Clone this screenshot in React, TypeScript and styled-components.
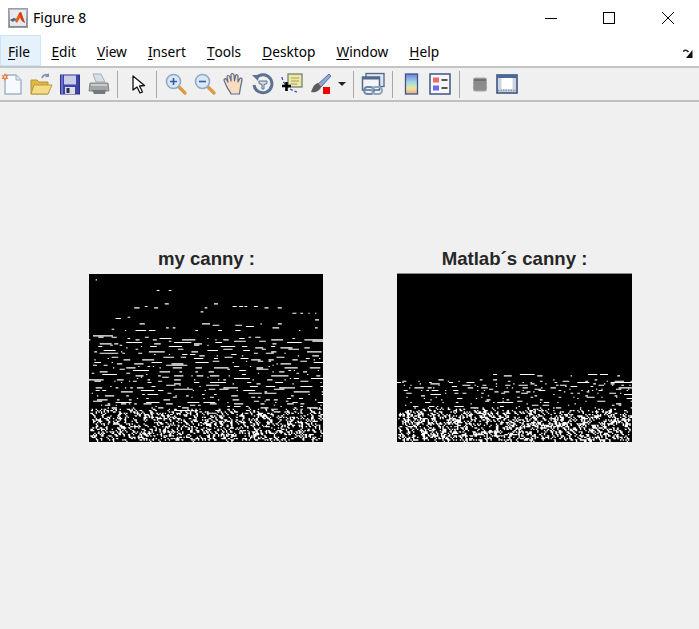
import React from "react";
import styled, { createGlobalStyle } from "styled-components";

const GlobalStyle = createGlobalStyle`
  html, body {
    margin: 0;
    padding: 0;
    background: #f0f0f0;
  }
`;

// rough edge map: cells are 4/3 px like the scaled image in the figure
type Band = { from: number; to: number; rowStep: number; gap: number; maxLen: number };

const makeRandom = (seed: number) => () => {
  seed = (seed + 0x6d2b79f5) | 0;
  let t = Math.imul(seed ^ (seed >>> 15), 1 | seed);
  t = (t + Math.imul(t ^ (t >>> 7), 61 | t)) ^ t;
  return ((t ^ (t >>> 14)) >>> 0) / 4294967296;
};

const cell = (x: number, y: number, w: number) => `M${x} ${y}h${w}v.8h-${w}z`;

const buildEdges = (seed: number, sparse: number[][], bands: Band[], noiseFrom: number, noise: number) => {
  const random = makeRandom(seed);
  let d = sparse.map(([x, y, w]) => cell(x, y, w)).join("");
  bands.forEach((band) => {
    for (let y = band.from; y < band.to; y += band.rowStep) {
      let x = Math.floor(random() * band.gap);
      while (x < 176) {
        const w = 1 + Math.floor(random() * random() * band.maxLen);
        const row = y + Math.floor(random() * 3) - 1;
        d += cell(x, row, Math.min(w, 176 - x));
        x += w + 2 + Math.floor(random() * band.gap);
      }
    }
  });
  for (let y = noiseFrom; y < 125; y++) {
    const ramp = Math.min(1, 0.3 + (y - noiseFrom) / 6);
    for (let x = 1; x < 175; x++) {
      if (random() < noise * ramp) {
        d += `M${x} ${y}h${random() < 0.3 ? 2 : 1}v1h-${1}z`;
        if (random() < 0.35) d += `M${x + 1} ${y + 1}h1v1h-1z`;
      }
    }
  }
  return d;
};

const myCannyEdges = buildEdges(
  7,
  [
    [5, 4, 1], [51, 12, 2], [60, 12, 2], [34, 25, 4], [42, 24, 2], [49, 25, 3], [57, 22, 3],
    [87, 25, 2], [94, 22, 3], [84, 28, 2], [108, 24, 3], [113, 24, 3], [117, 24, 2], [124, 24, 3],
    [132, 25, 3], [142, 25, 3], [153, 29, 3], [159, 29, 2], [165, 29, 1], [170, 29, 1], [20, 33, 4],
    [29, 32, 2], [38, 37, 4], [85, 37, 6], [93, 38, 5], [110, 38, 5], [118, 39, 6], [129, 37, 1],
    [142, 37, 3], [170, 34, 3], [170, 40, 2], [17, 41, 2], [27, 42, 1], [35, 42, 8], [45, 42, 5],
    [58, 40, 2], [63, 40, 2], [80, 42, 2], [97, 42, 3], [110, 42, 4], [138, 40, 5], [158, 42, 1],
    [3, 46, 15], [58, 68, 16], [64, 86, 14], [20, 96, 12], [64, 102, 12],
  ],
  [
    { from: 48, to: 78, rowStep: 3, gap: 9, maxLen: 16 },
    { from: 78, to: 98, rowStep: 3, gap: 10, maxLen: 14 },
    { from: 98, to: 106, rowStep: 3, gap: 12, maxLen: 8 },
  ],
  100,
  0.24
);

const matlabCannyEdges = buildEdges(
  11,
  [
    [72, 75, 3], [80, 76, 6], [92, 75, 11], [105, 76, 4], [143, 75, 7], [152, 75, 6], [0, 81, 3],
    [130, 76, 1], [165, 76, 2], [160, 81, 16], [166, 85, 10], [172, 90, 4], [75, 96, 12], [25, 90, 8],
  ],
  [
    { from: 80, to: 90, rowStep: 2, gap: 9, maxLen: 8 },
    { from: 90, to: 100, rowStep: 3, gap: 11, maxLen: 7 },
  ],
  100,
  0.3
);

const Figure8 = () => {
  const tools = [NewIcon, OpenIcon, SaveIcon, PrintIcon];
  const navTools = [ZoomInIcon, ZoomOutIcon, HandIcon, RotateIcon, DataCursorIcon, BrushIcon];

  return (
    <Window>
      <GlobalStyle />
      <TitleBar>
        <MatlabLogo />
        <WindowTitle>Figure 8</WindowTitle>
        <WindowButtons>
          <WindowButton>
            <svg width="14" height="14" viewBox="0 0 14 14">
              <path d="M1 7.5h12" stroke="#000" fill="none" />
            </svg>
          </WindowButton>
          <WindowButton>
            <svg width="14" height="14" viewBox="0 0 14 14">
              <rect x="1.5" y="1.5" width="11" height="11" stroke="#000" fill="none" />
            </svg>
          </WindowButton>
          <WindowButton>
            <svg width="14" height="14" viewBox="0 0 14 14">
              <path d="M1 1l12 12M13 1L1 13" stroke="#000" fill="none" />
            </svg>
          </WindowButton>
        </WindowButtons>
      </TitleBar>

      <MenuBar>
        <MenuItem $active>
          <u>F</u>ile
        </MenuItem>
        <MenuItem>
          <u>E</u>dit
        </MenuItem>
        <MenuItem>
          <u>V</u>iew
        </MenuItem>
        <MenuItem>
          <u>I</u>nsert
        </MenuItem>
        <MenuItem>
          <u>T</u>ools
        </MenuItem>
        <MenuItem>
          <u>D</u>esktop
        </MenuItem>
        <MenuItem>
          <u>W</u>indow
        </MenuItem>
        <MenuItem>
          <u>H</u>elp
        </MenuItem>
        <UndockSlot>
          <svg width="10" height="9" viewBox="0 0 10 9">
            <path d="M0 2.5C2 .5 4 1 5.5 3" stroke="#222" strokeWidth="1.6" fill="none" />
            <path d="M9.5 1v8H3z" fill="#111" />
          </svg>
        </UndockSlot>
      </MenuBar>

      <Toolbar>
        <ToolGroup>
          {tools.map((Icon, i) => (
            <Icon key={i} />
          ))}
        </ToolGroup>
        <Separator $left={6} $right={8} />
        <ToolGroup>
          <CursorIcon />
        </ToolGroup>
        <Separator $left={6} $right={7} />
        <ToolGroup>
          {navTools.map((Icon, i) => (
            <Icon key={i} />
          ))}
        </ToolGroup>
        <DropArrow />
        <Separator $left={7} $right={7} />
        <ToolGroup>
          <LinkIcon />
        </ToolGroup>
        <Separator $left={7} $right={6} />
        <ToolGroup>
          <ColorbarIcon />
          <LegendIcon />
        </ToolGroup>
        <Separator $left={7} $right={8} />
        <ToolGroup $gap={3}>
          <PlainAxesIcon />
          <LayoutIcon />
        </ToolGroup>
      </Toolbar>

      <PlotArea>
        <PlotColumn>
          <PlotTitle>my canny :</PlotTitle>
          <Axes>
            <EdgeImage d={myCannyEdges} />
          </Axes>
        </PlotColumn>
        <PlotColumn>
          <PlotTitle>Matlab´s canny :</PlotTitle>
          <Axes $topEdge>
            <EdgeImage d={matlabCannyEdges} />
          </Axes>
        </PlotColumn>
      </PlotArea>
    </Window>
  );
};

export default Figure8;

const EdgeImage = ({ d }: { d: string }) => (
  <svg width="100%" height="100%" viewBox="0 0 176 126" preserveAspectRatio="none" style={{ display: "block" }}>
    <path d={d} fill="#fff" />
  </svg>
);

const Icon = ({ children }: { children: React.ReactNode }) => (
  <svg width="24" height="24" viewBox="0 0 24 24">
    {children}
  </svg>
);

const MatlabLogo = () => (
  <LogoWrapper>
    <svg width="20" height="20" viewBox="0 0 20 20">
      <defs>
        <linearGradient id="logoBack" x1="0" y1="0" x2="0" y2="1">
          <stop offset="0" stopColor="#b9bcc4" />
          <stop offset="1" stopColor="#7f8791" />
        </linearGradient>
      </defs>
      <rect x="0.5" y="0.5" width="19" height="19" fill="url(#logoBack)" stroke="#9a9ea6" />
      <rect x="2" y="2" width="16" height="16" fill="#e8e9ec" />
      <path d="M2 12l4-2 2 1 3-6 2-1 4 11-3-2-2-3-3 5-3-3z" fill="#e2601c" />
      <path d="M2 12l4-2 2 1-3 3z" fill="#3c6d9f" />
      <path d="M11 5l2-1 4 11-3-2z" fill="#c8401a" />
    </svg>
  </LogoWrapper>
);

const NewIcon = () => (
  <Icon>
    <path d="M5 3h11l5 5v14H5z" fill="#f6f9fd" stroke="#9db2c8" strokeWidth="1.4" />
    <path d="M16 3v5h5" fill="#dde6f0" stroke="#9db2c8" />
    <path d="M5 1l1 2.4L8.5 3 7 5l1.5 2L6 6.7 5 9 4 6.700 1.500 7 3 5 1.500 3 4 3.400z" fill="#e8692c" />
    <circle cx="5" cy="5" r="1.3" fill="#ffd9a0" />
  </Icon>
);

const OpenIcon = () => (
  <Icon>
    <path d="M13 6c1-3 4-4 6-3" stroke="#7d8fa3" strokeWidth="1.6" fill="none" />
    <path d="M20 1v4h-4z" fill="#7d8fa3" />
    <path d="M2 8h6l2 2h9v12H2z" fill="#e2b93f" stroke="#b09440" />
    <path d="M2 22l3-9h18l-4 9z" fill="#f4dc86" stroke="#b8993c" />
  </Icon>
);

const SaveIcon = () => (
  <Icon>
    <rect x="2.500" y="3" width="19" height="19" fill="#3d45a8" stroke="#2b3080" />
    <rect x="6" y="3.500" width="12" height="9" fill="#c9cee6" />
    <rect x="7" y="15" width="10" height="7" fill="#dcdde8" />
    <rect x="8.500" y="16" width="3" height="5" fill="#2a2d55" />
    <path d="M3 3h2v19H3z" fill="#6a72cc" />
  </Icon>
);

const PrintIcon = () => (
  <Icon>
    <path d="M6 2h8l4 8H9z" fill="#d6dee6" stroke="#a5adb6" />
    <path d="M3 11h18l1 8H2z" fill="#a2a6a8" stroke="#86898b" />
    <path d="M5 18h14l-1 4H7z" fill="#75797b" />
    <path d="M4 12h16v2H4z" fill="#c8cccd" />
  </Icon>
);

const CursorIcon = () => (
  <Icon>
    <path d="M7 4l0 14 4-3 3 6 2.500-1-3-6 5-.5z" fill="#fff" stroke="#111" strokeWidth="1.3" strokeLinejoin="round" />
  </Icon>
);

const Lens = ({ children }: { children?: React.ReactNode }) => (
  <Icon>
    <path d="M14 14l7 7" stroke="#dc9a45" strokeWidth="3.4" strokeLinecap="round" />
    <circle cx="9.500" cy="9.500" r="7" fill="#d8e8f6" stroke="#8fa9c6" strokeWidth="1.6" />
    {children}
  </Icon>
);

const ZoomInIcon = () => (
  <Lens>
    <path d="M6 9.500h7M9.500 6v7" stroke="#3a5c96" strokeWidth="1.6" />
  </Lens>
);

const ZoomOutIcon = () => (
  <Lens>
    <path d="M6 9.500h7" stroke="#3a5c96" strokeWidth="1.6" />
  </Lens>
);

const HandIcon = () => (
  <Icon>
    <path
      d="M4 13c-1-3-3-5-1.500-6S5 8 6 10L5 5c0-2 2-2 3 0l1 4V3c0-2 2.500-2 3 0l.5 6 1-5c.5-2 2.500-1.500 2.500.5L16 10l1.500-3c1-1.500 3-1 2.500 1l-1.500 7c-.5 3-1 7-1 7H9c-1-3-3.500-5-5-9z"
      fill="#f9dcc0"
      stroke="#5a6d8c"
      strokeWidth="1.200"
      strokeLinejoin="round"
    />
  </Icon>
);

const RotateIcon = () => (
  <Icon>
    <path d="M5 6a9 9 0 1 1-2 7" fill="none" stroke="#5b7391" strokeWidth="3" />
    <path d="M1 3l7 0-1 6z" fill="#5b7391" />
    <path d="M8 9h8v2.500l-3 1V17h-2v-4.500l-3-1z" fill="#cfdbe8" stroke="#5b7391" />
  </Icon>
);

const DataCursorIcon = () => (
  <Icon>
    <path d="M2 5c1 6 5 12 15 15" fill="none" stroke="#3a3ad0" strokeWidth="1.300" strokeDasharray="3 2" />
    <rect x="8" y="2" width="14" height="13" fill="#eee8a4" stroke="#7d8a78" strokeWidth="1.400" />
    <path d="M11 6h8M11 9h8M11 12h6" stroke="#a0a070" />
    <path d="M2 14h9M6.500 10v9" stroke="#000" strokeWidth="2.600" />
  </Icon>
);

const BrushIcon = () => (
  <Icon>
    <path d="M20 2l2 2-10 11-3-3z" fill="#8fa6cf" stroke="#5a6f9c" />
    <path d="M9 11c-4 1-5 4-7 9 4 1 9-1 10-5z" fill="#5c5c5c" />
    <rect x="14" y="15" width="7" height="7" fill="#f00000" />
  </Icon>
);

const LinkIcon = () => (
  <Icon>
    <rect x="5" y="1.500" width="18" height="13" fill="#dce6f0" stroke="#50688a" strokeWidth="1.300" />
    <rect x="1.500" y="5" width="17" height="13" fill="#f2f5f8" stroke="#50688a" strokeWidth="1.500" />
    <path d="M1.500 5h17v2.500h-17z" fill="#50688a" />
    <rect x="3" y="15" width="10" height="7" rx="3.500" fill="none" stroke="#6c86a6" strokeWidth="2" />
    <rect x="11" y="15" width="10" height="7" rx="3.500" fill="none" stroke="#8ea4bd" strokeWidth="2" />
  </Icon>
);

const ColorbarIcon = () => (
  <Icon>
    <defs>
      <linearGradient id="barColors" x1="0" y1="0" x2="0" y2="1">
        <stop offset="0" stopColor="#6f7fd8" />
        <stop offset="0.4" stopColor="#9fd8e8" />
        <stop offset="0.7" stopColor="#e8e8a0" />
        <stop offset="1" stopColor="#f0a890" />
      </linearGradient>
    </defs>
    <rect x="6.500" y="2" width="12" height="20" fill="url(#barColors)" stroke="#3c5585" strokeWidth="1.300" />
  </Icon>
);

const LegendIcon = () => (
  <Icon>
    <rect x="2" y="2" width="20" height="20" fill="#f6f7fa" stroke="#3c5585" strokeWidth="1.500" />
    <rect x="5" y="5.500" width="6" height="5" fill="#ee6a68" />
    <rect x="5" y="13.500" width="6" height="5" fill="#6a6ae8" />
    <path d="M13.500 8h6M13.500 16h6" stroke="#222" strokeWidth="1.400" />
  </Icon>
);

const PlainAxesIcon = () => (
  <Icon>
    <rect x="5.500" y="6" width="13" height="13" rx="1.500" fill="#8c8c8c" stroke="#a8a8a8" />
    <path d="M6 7h12v2H6z" fill="#6f6f6f" />
  </Icon>
);

const LayoutIcon = () => (
  <Icon>
    <rect x="2" y="3" width="20" height="18" fill="#cdd5e0" stroke="#3c5585" strokeWidth="1.600" />
    <rect x="6.500" y="6" width="11" height="11" fill="#fff" />
    <path d="M2 3h20v3H2z" fill="#4e6896" />
    <path d="M3 18.500h18" stroke="#8a96a8" strokeWidth="1.500" strokeDasharray="1.500 1" />
  </Icon>
);

const Window = styled.div`
  width: 699px;
  height: 629px;
  overflow: hidden;
  background: #f0f0f0;
  display: flex;
  flex-direction: column;
`;

const TitleBar = styled.div`
  height: 35px;
  background: #fff;
  display: flex;
  align-items: center;
  padding-left: 8px;
  box-sizing: border-box;
`;

const LogoWrapper = styled.div`
  width: 20px;
  height: 20px;
  margin-top: 1px;
  flex: none;
`;

const WindowTitle = styled.div`
  margin-left: 5px;
  font: 14px "Noto Sans", "Open Sans", sans-serif;
  color: #000;
`;

const WindowButtons = styled.div`
  margin-left: auto;
  margin-right: 2px;
  display: flex;
`;

const WindowButton = styled.div`
  width: 58.500px;
  height: 35px;
  display: flex;
  align-items: center;
  justify-content: center;
`;

const MenuBar = styled.div`
  height: 33px;
  background: #fff;
  border-bottom: 2px solid #c4c4c4;
  box-sizing: border-box;
  display: flex;
`;

const MenuItem = styled.div<{ $active?: boolean }>`
  display: flex;
  align-items: center;
  white-space: pre;
  box-sizing: border-box;
  padding: 2px 10.500px 0;
  font: 13.700px "Noto Sans", "Open Sans", sans-serif;
  color: #000;
  border: 1px solid ${(p) => (p.$active ? "#cde6f7" : "transparent")};
  background: ${(p) => (p.$active ? "#e5f1fb" : "transparent")};
  ${(p) => (p.$active ? "padding-left: 7px; padding-right: 10px;" : "")}
  border-width: ${(p) => (p.$active ? "1px" : "0")};

  u {
    text-underline-offset: 2px;
  }
`;

const UndockSlot = styled.div`
  margin-left: auto;
  margin-right: 6px;
  padding-top: 9px;
`;

const Toolbar = styled.div`
  height: 34px;
  background: #f0f0f0;
  border-bottom: 2px solid #c0c0c0;
  box-sizing: border-box;
  display: flex;
  align-items: center;
`;

const ToolGroup = styled.div<{ $gap?: number }>`
  display: flex;
  gap: ${(p) => p.$gap ?? 5}px;

  svg {
    display: block;
  }
`;

const Separator = styled.div<{ $left: number; $right: number }>`
  width: 1px;
  height: 27px;
  background: #a8a8a8;
  flex: none;
  margin-left: ${(p) => p.$left}px;
  margin-right: ${(p) => p.$right}px;
`;

const DropArrow = styled.div`
  margin-left: 5px;
  width: 0;
  height: 0;
  border-left: 4px solid transparent;
  border-right: 4px solid transparent;
  border-top: 4px solid #222;
`;

const PlotArea = styled.div`
  flex: 1;
  display: flex;
  gap: 73px;
  padding: 146px 0 0 89px;
  background: #f0f0f0;
`;

const PlotColumn = styled.div`
  width: 235px;
`;

const PlotTitle = styled.div`
  height: 26px;
  text-align: center;
  font: bold 18.600px/22px "Liberation Sans", Arial, sans-serif;
  color: #262626;
  white-space: nowrap;
`;

const Axes = styled.div<{ $topEdge?: boolean }>`
  width: ${(p) => (p.$topEdge ? 235 : 234)}px;
  height: 168px;
  background: #000;
  box-shadow: ${(p) => (p.$topEdge ? "0 -1px 0 #8a8a8a" : "none")};
`;
